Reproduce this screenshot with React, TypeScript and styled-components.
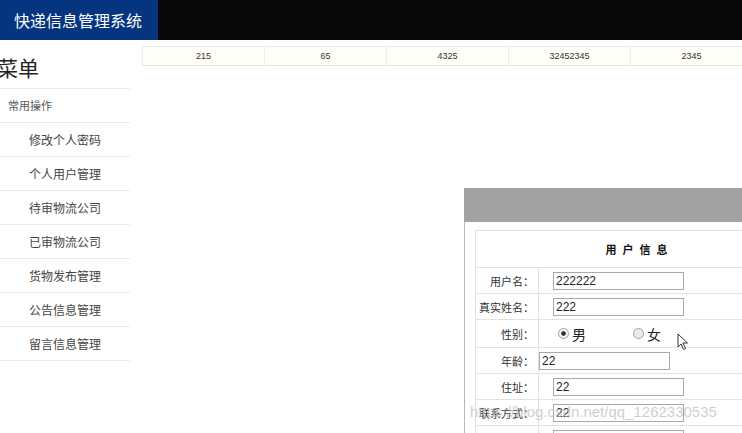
import React from "react";
import styled, { createGlobalStyle } from "styled-components";

const menuItems = [
  "修改个人密码",
  "个人用户管理",
  "待审物流公司",
  "已审物流公司",
  "货物发布管理",
  "公告信息管理",
  "留言信息管理",
];

const stats = ["215", "65", "4325", "32452345", "2345"];

const GlobalStyle = createGlobalStyle`
  html, body {
    margin: 0;
    padding: 0;
    background: #ffffff;
    overflow: hidden;
  }
  body {
    font-family: "Liberation Sans", "Noto Sans CJK SC", sans-serif;
  }
`;

const Page = styled.div`
  width: 742px;
  height: 433px;
  position: relative;
  overflow: hidden;
`;

const Header = styled.header`
  height: 40px;
  background: #080808;
  display: flex;
`;

const Brand = styled.div`
  width: 158px;
  background: #06357f;
  color: #ffffff;
  font-family: "Noto Sans CJK SC", sans-serif;
  font-size: 16px;
  display: flex;
  align-items: center;
  padding-left: 14px;
  box-sizing: border-box;
  white-space: nowrap;
`;

const Body = styled.div`
  display: flex;
`;

const Sidebar = styled.aside`
  width: 130px;
  flex-shrink: 0;
  font-family: "Noto Sans CJK SC", sans-serif;
`;

const MenuTitle = styled.div`
  height: 48px;
  line-height: 54px;
  font-size: 21px;
  color: #222;
  margin-left: -3px;
  border-bottom: 1px solid #ececec;
`;

const GroupTitle = styled.div`
  height: 33px;
  line-height: 33px;
  padding-left: 8px;
  font-size: 11px;
  color: #555;
  border-bottom: 1px solid #ececec;
`;

const MenuItem = styled.div`
  height: 33px;
  line-height: 34px;
  text-align: center;
  font-size: 12px;
  color: #444;
  border-bottom: 1px solid #ececec;
`;

const Main = styled.main`
  flex: 1;
  padding-left: 12px;
  padding-top: 6px;
  overflow: hidden;
`;

const StatsBar = styled.div`
  display: flex;
  width: 620px;
  background: #fffff6;
  border-top: 1px solid #ecece0;
  border-bottom: 1px solid #e6e6d4;
`;

const StatCell = styled.div`
  width: 122px;
  height: 18px;
  line-height: 18px;
  flex-shrink: 0;
  text-align: center;
  font-size: 9px;
  color: #333;
  border-left: 1px solid #ecece0;
  box-sizing: border-box;
`;

const Panel = styled.section`
  margin-top: 122px;
  margin-left: 322px;
  width: 320px;
`;

const PanelHead = styled.div`
  height: 34px;
  background: #a2a2a2;
`;

const PanelBody = styled.div`
  border-left: 1px solid #b8b8b8;
  padding: 8px 0 0 10px;
  height: 220px;
`;

const Table = styled.table`
  border-collapse: collapse;
  width: 320px;
  font-family: "Noto Sans CJK SC", sans-serif;
`;

const TitleCell = styled.td`
  height: 34px;
  text-align: center;
  font-size: 11px;
  font-weight: bold;
  letter-spacing: 6px;
  color: #111;
  border: 1px solid #e2e2e2;
  padding-left: 10px;
`;

const Row = styled.tr<{ $h?: number }>`
  height: ${({ $h }) => $h ?? 26}px;
`;

const LabelCell = styled.td`
  width: 58px;
  text-align: right;
  font-size: 11px;
  color: #333;
  padding: 0 4px 0 0;
  border: 1px solid #e2e2e2;
  white-space: nowrap;
`;

const ValueCell = styled.td`
  border: 1px solid #e2e2e2;
  padding: 0;
`;

const TextInput = styled.div<{ $offset?: number }>`
  width: 131px;
  height: 18px;
  margin-left: ${({ $offset }) => $offset ?? 14}px;
  border: 1px solid #a9a9a9;
  box-sizing: border-box;
  font-family: "Liberation Sans", sans-serif;
  font-size: 12px;
  line-height: 16px;
  padding-left: 2px;
  color: #222;
`;

const RadioGroup = styled.div`
  display: flex;
  align-items: center;
  padding-left: 19px;
  gap: 47px;
`;

const RadioOption = styled.span`
  display: inline-flex;
  align-items: center;
  gap: 3px;
  font-size: 14px;
  color: #222;
`;

const RadioDot = styled.span<{ $checked?: boolean }>`
  width: 9px;
  height: 9px;
  border-radius: 50%;
  border: 1px solid #a0a0a0;
  background: ${({ $checked }) =>
    $checked
      ? "radial-gradient(circle, #333 0 2px, #f4f4f4 2.5px)"
      : "#eaeaea"};
`;

const Watermark = styled.div`
  position: absolute;
  left: 470px;
  top: 403px;
  font-family: "Liberation Sans", sans-serif;
  font-size: 15px;
  color: rgba(190, 190, 190, 0.75);
  white-space: nowrap;
  pointer-events: none;
`;

const Cursor = styled.svg`
  position: absolute;
  left: 677px;
  top: 333px;
`;

const fields: { label: string; value: string; offset?: number }[] = [
  { label: "年龄：", value: "22", offset: 0 },
  { label: "住址：", value: "22" },
  { label: "联系方式：", value: "22" },
  { label: "", value: "" },
];

export default function App() {
  return (
    <Page>
      <GlobalStyle />
      <Header>
        <Brand>快递信息管理系统</Brand>
      </Header>
      <Body>
        <Sidebar>
          <MenuTitle>菜单</MenuTitle>
          <GroupTitle>常用操作</GroupTitle>
          {menuItems.map((item) => (
            <MenuItem key={item}>{item}</MenuItem>
          ))}
        </Sidebar>
        <Main>
          <StatsBar>
            {stats.map((s) => (
              <StatCell key={s}>{s}</StatCell>
            ))}
          </StatsBar>
          <Panel>
            <PanelHead />
            <PanelBody>
              <Table>
                <tbody>
                  <tr>
                    <TitleCell colSpan={2}>用户信息</TitleCell>
                  </tr>
                  <Row>
                    <LabelCell>用户名：</LabelCell>
                    <ValueCell>
                      <TextInput>222222</TextInput>
                    </ValueCell>
                  </Row>
                  <Row>
                    <LabelCell>真实姓名：</LabelCell>
                    <ValueCell>
                      <TextInput>222</TextInput>
                    </ValueCell>
                  </Row>
                  <Row $h={28}>
                    <LabelCell>性别：</LabelCell>
                    <ValueCell>
                      <RadioGroup>
                        <RadioOption>
                          <RadioDot $checked />男
                        </RadioOption>
                        <RadioOption>
                          <RadioDot />女
                        </RadioOption>
                      </RadioGroup>
                    </ValueCell>
                  </Row>
                  {fields.map((f, i) => (
                    <Row key={i}>
                      <LabelCell>{f.label}</LabelCell>
                      <ValueCell>
                        <TextInput $offset={f.offset}>{f.value}</TextInput>
                      </ValueCell>
                    </Row>
                  ))}
                </tbody>
              </Table>
            </PanelBody>
          </Panel>
        </Main>
      </Body>
      <Watermark>https://blog.csdn.net/qq_1262330535</Watermark>
      <Cursor width="12" height="18" viewBox="0 0 12 18">
        <path
          d="M1 1 L1 14 L4 11 L6.5 16.5 L8.5 15.5 L6 10 L10.5 10 Z"
          fill="#fff"
          stroke="#333"
          strokeWidth="1"
          strokeLinejoin="round"
        />
      </Cursor>
    </Page>
  );
}
